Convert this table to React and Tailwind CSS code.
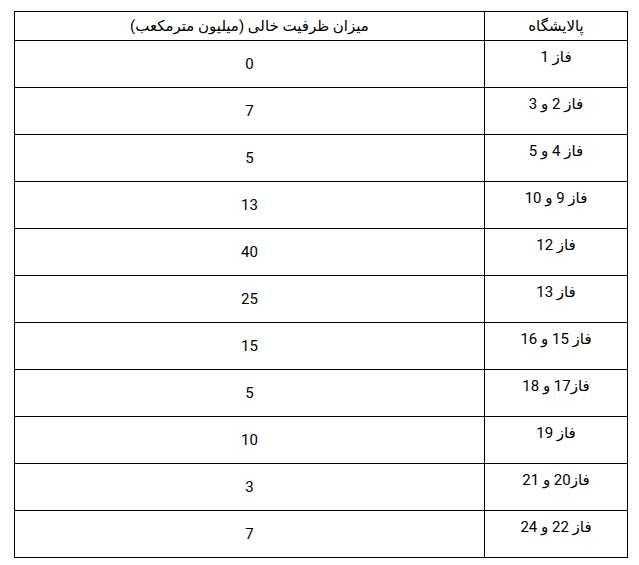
import React from 'react';

const rows = [
  ['فاز 1', '0'],
  ['فاز 2 و 3', '7'],
  ['فاز 4 و 5', '5'],
  ['فاز 9 و 10', '13'],
  ['فاز 12', '40'],
  ['فاز 13', '25'],
  ['فاز 15 و 16', '15'],
  ['فاز17 و 18', '5'],
  ['فاز 19', '10'],
  ['فاز20 و 21', '3'],
  ['فاز 22 و 24', '7'],
];

const App = () => {
  return (
    <div className="w-[639px] h-[565px] bg-white pt-[11px] pl-[14px]" style={{ fontFamily: 'Roboto, "DejaVu Sans", sans-serif' }}>
      <table dir="rtl" className="border-collapse w-[614px] text-[15px] text-black table-fixed">
        <thead>
          <tr className="h-[29px]">
            <th className="w-[143px] border border-black font-normal align-middle text-center">پالایشگاه</th>
            <th className="border border-black font-normal align-middle text-center">میزان ظرفیت خالی (میلیون مترمکعب)</th>
          </tr>
        </thead>
        <tbody>
          {rows.map(([name, val], i) => (
            <tr key={i} className="h-[47px]">
              <td className="border border-black align-top text-center pt-[5px]">{name}</td>
              <td className="border border-black align-middle text-center">{val}</td>
            </tr>
          ))}
        </tbody>
      </table>
    </div>
  );
};

export default App;
